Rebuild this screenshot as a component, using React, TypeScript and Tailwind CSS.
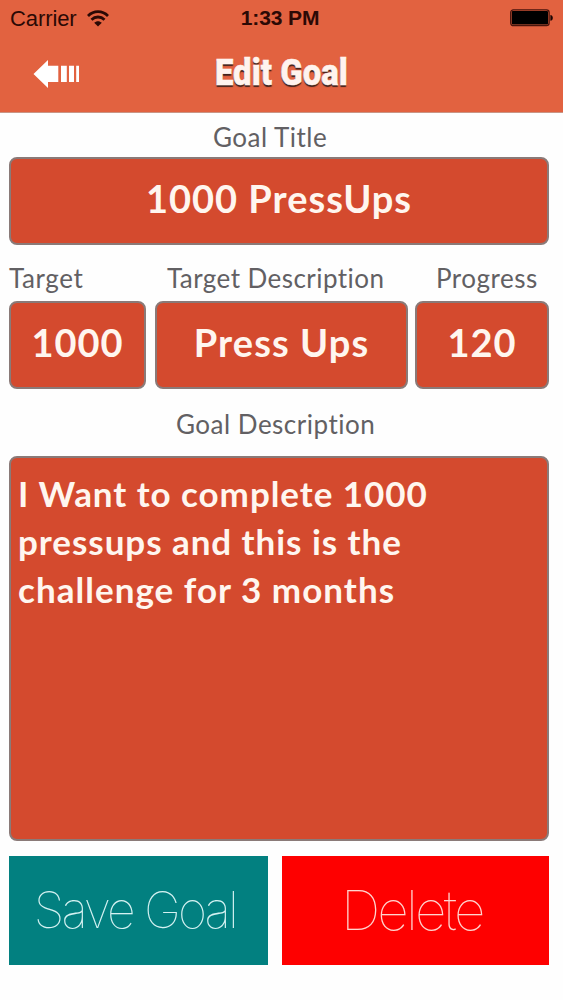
import React from "react";

const label =
  "font-['Lato',sans-serif] text-[26px] leading-8 text-[#626063] whitespace-nowrap";
const field =
  "flex items-center justify-center rounded-[8px] border-2 border-[#8a7a78] bg-[#d44a2e] font-['Lato',sans-serif] text-[38px] font-bold text-[#fff6ef] whitespace-nowrap";

function StatusBar() {
  return (
    <div className="grid h-9 grid-cols-3 items-center px-[10px] font-['Liberation_Sans',sans-serif] text-[22px] text-[#2b0905]">
      <div className="flex items-center gap-[10px]">
        <span className="tracking-[-0.1px]">Carrier</span>
        <svg width="22" height="17" viewBox="0 0 22 16" fill="none" stroke="#2b0905" strokeWidth="2.8">
          <path d="M1 5.4C6.7-.2 15.3-.2 21 5.4" />
          <path d="M4.5 9.2C8.2 5.6 13.8 5.6 17.5 9.2" />
          <path d="M7.2 12.2C9.4 10.1 12.6 10.1 14.8 12.2L11 16Z" fill="#2b0905" stroke="none" />
        </svg>
      </div>
      <span className="pr-[3px] text-center text-[21px] font-bold tracking-[-0.1px]">1:33 PM</span>
      <svg className="justify-self-end" width="43" height="18" viewBox="0 0 43 18">
        <rect x="0.7" y="0.9" width="38.4" height="15.8" rx="2.6" fill="none" stroke="#4a140c" strokeWidth="1.3" />
        <rect x="1.8" y="2" width="36.2" height="13.6" rx="1" fill="#000" />
        <path d="M40.4 6C43.6 6.2 43.6 11.6 40.4 11.8Z" fill="#1c0503" />
      </svg>
    </div>
  );
}

export default function App() {
  return (
    <div className="flex h-[1000px] w-[563px] flex-col bg-[#fefefe]">
      <header className="h-[113px] border-b border-[#c99585] bg-[#e26240]">
        <StatusBar />
        <div className="grid h-[76px] grid-cols-[1fr_auto_1fr] items-center">
          <button aria-label="Back" className="ml-[33px] w-[46px]">
            <svg width="46" height="28" viewBox="0 0 46 28" fill="#fff">
              <path d="M.5 14 15 0V5.8H25.3V22H15V28Z" />
              <path d="M28 5.8H33.8V22H28ZM36 5.8H41V22H36ZM43.2 5.8H46V22H43.2Z" />
            </svg>
          </button>
          <h1 className="w-[134px] whitespace-nowrap pb-[4px] font-['Roboto',sans-serif] text-[37px] font-black leading-none text-[#fff3ee] [-webkit-text-stroke:0.5px_#fff3ee] [text-shadow:0_1.5px_1px_#40221c]">
            <span className="inline-block origin-left scale-x-[0.89]">Edit Goal</span>
          </h1>
          <span />
        </div>
      </header>

      <main className="flex flex-col pl-[9px] pr-[14px]">
        <div className={`${label} mt-2 pl-[204px] tracking-[0.5px]`}>Goal Title</div>
        <div className={`${field} mt-[3.5px] h-[88px] pb-[4px] tracking-[1px]`}>1000 PressUps</div>

        <div className="mt-[17px] flex h-8">
          <span className={`${label} w-[158px] tracking-[0.6px]`}>Target</span>
          <span className={`${label} w-[269px] tracking-[0.45px]`}>Target Description</span>
          <span className={`${label} tracking-[0.5px]`}>Progress</span>
        </div>
        <div className="mt-[7.5px] flex">
          <div className={`${field} h-[88px] w-[137px] pb-[6px] tracking-[0.9px]`}>1000</div>
          <div className={`${field} ml-[9px] h-[88px] w-[253px] pb-[6px] tracking-[1.1px]`}>Press Ups</div>
          <div className={`${field} ml-[7px] h-[88px] w-[134px] pb-[6px] tracking-[1px]`}>120</div>
        </div>

        <div className={`${label} mt-[19px] pl-[167px] tracking-[0.5px]`}>Goal Description</div>
        <div className="mt-[16px] h-[385px] rounded-[8px] border-2 border-[#8a7a78] bg-[#d44a2e] px-[7px] pt-[11px] font-['Lato',sans-serif] text-[35px] font-bold leading-[48px] text-[#fff6ef]">
          <p className="whitespace-nowrap tracking-[0.95px]">I Want to complete 1000</p>
          <p className="whitespace-nowrap tracking-[0.95px]">pressups and this is the</p>
          <p className="whitespace-nowrap tracking-[1.03px]">challenge for 3 months</p>
        </div>

        <div className="mt-[14.5px] flex h-[109.5px] gap-[14px] font-['Inter',sans-serif] font-thin">
          <button className="w-[258.5px] bg-[#028080] pr-[7px] text-[50px] text-[#d5f2f2]">
            <span className="whitespace-nowrap tracking-[-2.9px]">Save Goal</span>
          </button>
          <button className="w-[267.5px] bg-[#fe0000] pr-[7px] text-[55px] text-[#ffd5cf]">
            <span className="whitespace-nowrap tracking-[-2.8px]">Delete</span>
          </button>
        </div>
      </main>
    </div>
  );
}
